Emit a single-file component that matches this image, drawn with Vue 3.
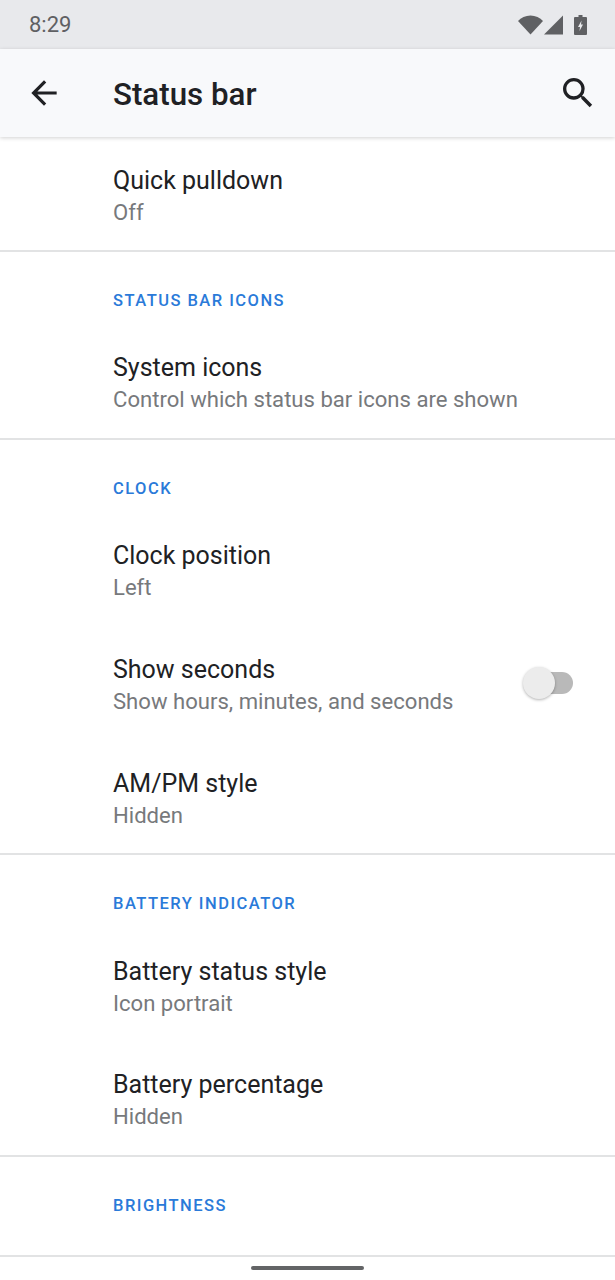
<template>
  <div class="screen">
    <div class="status-bar">
      <span class="time">8:29</span>
      <div class="status-icons">
        <svg width="25" height="20" viewBox="0 0 25 20"><path d="M0 6C3 2.600 7.500 .5 12.500 .5S22 2.600 25 6L12.500 19.500z" fill="#5f6063"/></svg>
        <svg class="signal" width="19" height="20" viewBox="0 0 19 20"><path d="M19 .5v19H0z" fill="#5f6063"/></svg>
        <svg class="battery" width="13" height="20" viewBox="0 0 13 20"><path d="M4.500 0h4v2h3.500a1 1 0 0 1 1 1v16a1 1 0 0 1-1 1H1a1 1 0 0 1-1-1V3a1 1 0 0 1 1-1h3.500z" fill="#5f6063"/><path d="M7.500 5.500 4 12h2l-.5 4L9 9.500H7z" fill="#e8e9ec"/></svg>
      </div>
    </div>

    <header class="toolbar">
      <button class="icon-btn back">
        <svg width="38" height="38" viewBox="0 0 24 24"><path d="M20 11H7.830l5.590-5.590L12 4l-8 8 8 8 1.410-1.410L7.830 13H20z" fill="#202124"/></svg>
      </button>
      <h1 class="title">Status bar</h1>
      <button class="icon-btn search">
        <svg width="40" height="40" viewBox="0 0 24 24"><path d="M15.500 14h-.79l-.28-.27A6.470 6.470 0 0 0 16 9.500 6.500 6.500 0 1 0 9.500 16c1.610 0 3.090-.59 4.230-1.570l.27.28v.79l5 4.990L20.490 19l-4.990-5zm-6 0C7.010 14 5 11.990 5 9.500S7.010 5 9.500 5 14 7.010 14 9.500 11.990 14 9.500 14z" fill="#202124"/></svg>
      </button>
    </header>

    <section v-for="section in sections" :key="section.label" class="section" :class="{ top: !section.label }">
      <div v-if="section.label" class="section-label" :class="{ solo: !section.rows.length }">{{ section.label }}</div>
      <div v-for="row in section.rows" :key="row.title" class="row">
        <div class="row-text">
          <div class="row-title">{{ row.title }}</div>
          <div class="row-sub">{{ row.sub }}</div>
        </div>
        <div v-if="row.toggle" class="switch">
          <div class="track"></div>
          <div class="thumb"></div>
        </div>
      </div>
    </section>

    <div class="home-indicator"></div>
  </div>
</template>

<script setup>
const sections = [
  { label: '', rows: [{ title: 'Quick pulldown', sub: 'Off' }] },
  {
    label: 'STATUS BAR ICONS',
    rows: [{ title: 'System icons', sub: 'Control which status bar icons are shown' }]
  },
  {
    label: 'CLOCK',
    rows: [
      { title: 'Clock position', sub: 'Left' },
      { title: 'Show seconds', sub: 'Show hours, minutes, and seconds', toggle: true },
      { title: 'AM/PM style', sub: 'Hidden' }
    ]
  },
  {
    label: 'BATTERY INDICATOR',
    rows: [
      { title: 'Battery status style', sub: 'Icon portrait' },
      { title: 'Battery percentage', sub: 'Hidden' }
    ]
  },
  { label: 'BRIGHTNESS', rows: [] }
];
</script>

<style scoped>
.screen {
  position: relative;
  width: 615px;
  height: 1280px;
  overflow: hidden;
  background: #fff;
  font-family: Roboto, "Liberation Sans", sans-serif;
}

.status-bar {
  height: 49px;
  padding: 0 28px 0 29px;
  display: flex;
  align-items: center;
  justify-content: space-between;
  background: #e8e9ec;
}

.time {
  font-size: 22px;
  color: #5f6063;
}

.status-icons {
  display: flex;
  align-items: center;
}

.signal {
  margin-left: 1px;
}

.battery {
  margin-left: 11px;
}

.toolbar {
  position: relative;
  height: 88px;
  display: flex;
  align-items: center;
  background: #f8f9fb;
  box-shadow: 0 1px 4px rgba(0, 0, 0, 0.18);
}

.icon-btn {
  display: flex;
  padding: 0;
  border: none;
  background: none;
}

.back {
  margin-left: 25px;
}

.title {
  margin: 2px 0 0 50px;
  flex: 1;
  font-size: 31.3px;
  font-weight: 500;
  color: #202124;
}

.search {
  margin-right: 17px;
}

.section {
  border-bottom: 2px solid #e2e3e4;
}

.section.top {
  padding-top: 2px;
}

.section.top .row:last-child {
  margin-bottom: -3px;
}

.section-label {
  height: 74px;
  padding: 39px 0 0 113px;
  box-sizing: border-box;
  font-size: 16.5px;
  line-height: 20px;
  font-weight: 500;
  letter-spacing: 1.47px;
  color: #2a7ad9;
}

.section-label.solo {
  height: 98px;
}

.row {
  height: 113.85px;
  padding: 2px 42px 0 113px;
  box-sizing: border-box;
  display: flex;
  align-items: center;
  justify-content: space-between;
}

.row:last-child {
  margin-bottom: -2px;
}

.row-title {
  font-size: 25px;
  line-height: 32px;
  color: #202124;
}

.row-sub {
  font-size: 22.1px;
  line-height: 31px;
  color: #77797c;
}

.switch {
  position: relative;
  width: 50px;
  height: 32px;
  margin-top: -4px;
}

.track {
  position: absolute;
  left: 6px;
  right: 0;
  top: 5px;
  height: 22px;
  border-radius: 11px;
  background: #b9b9b9;
}

.thumb {
  position: absolute;
  left: 0;
  top: 0;
  width: 32px;
  height: 32px;
  border-radius: 50%;
  background: #ececec;
  box-shadow: 0 1px 3px rgba(0, 0, 0, 0.3);
}

.home-indicator {
  position: absolute;
  left: 251px;
  top: 1266px;
  width: 113px;
  height: 4px;
  border-radius: 2px;
  background: #636466;
}
</style>
